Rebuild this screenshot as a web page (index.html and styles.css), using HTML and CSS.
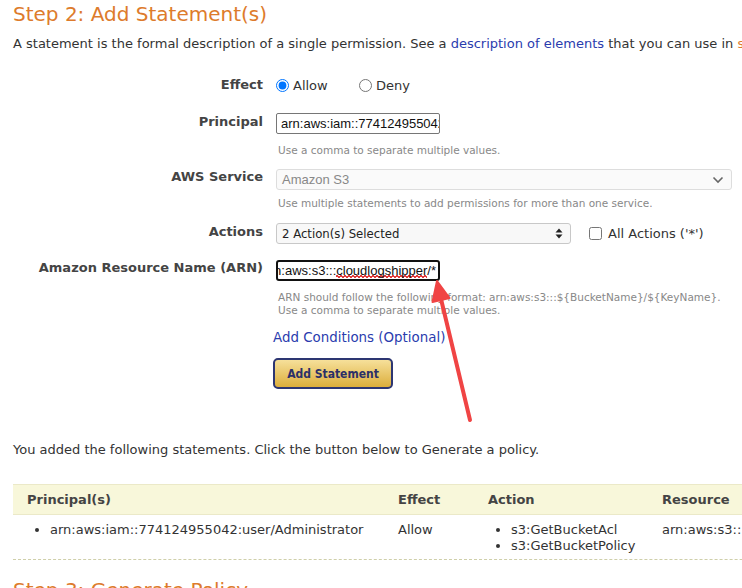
FILE: index.html
```html
<!DOCTYPE html>
<html>
<head>
<meta charset="utf-8">
<link rel="stylesheet" href="styles.css">
</head>
<body>
<div class="page">
  <h2 class="step-title">Step 2: Add Statement(s)</h2>
  <p class="intro">A statement is the formal description of a single permission. See a <a class="link" href="#">description of elements</a> that you can use in <a class="link-orange" href="#">statements</a>.</p>

  <div class="form">
    <div class="field field-effect">
      <div class="field-label">Effect</div>
      <div class="field-control radios">
        <label class="radio"><input type="radio" name="effect" checked> Allow</label>
        <label class="radio"><input type="radio" name="effect"> Deny</label>
      </div>
    </div>

    <div class="field field-principal">
      <div class="field-label">Principal</div>
      <div class="field-control">
        <div class="text-input">arn:aws:iam::774124955042:user/Administrator</div>
        <div class="hint hint-principal">Use a comma to separate multiple values.</div>
      </div>
    </div>

    <div class="field field-service">
      <div class="field-label">AWS Service</div>
      <div class="field-control">
        <div class="select select-disabled">
          <span>Amazon S3</span>
          <svg class="chevron" width="12" height="8" viewBox="0 0 12 8"><path d="M1.5 1.5 L6 6 L10.5 1.5" fill="none" stroke="#666" stroke-width="1.6"/></svg>
        </div>
        <div class="hint hint-service">Use multiple statements to add permissions for more than one service.</div>
      </div>
    </div>

    <div class="field field-actions">
      <div class="field-label">Actions</div>
      <div class="field-control actions-row">
        <div class="select select-actions">
          <span>2 Action(s) Selected</span>
          <svg class="updown" width="8" height="11" viewBox="0 0 8 11"><path d="M4 0.5 L7.5 4.5 L0.5 4.5 Z M4 10.5 L7.5 6.5 L0.5 6.5 Z" fill="#222"/></svg>
        </div>
        <label class="checkbox"><input type="checkbox"> All Actions ('*')</label>
      </div>
    </div>

    <div class="field field-arn">
      <div class="field-label">Amazon Resource Name (ARN)</div>
      <div class="field-control">
        <div class="text-input text-input-focus"><span>arn:aws:s3:::<span class="misspelled">cloudlogshipper</span>/*</span></div>
        <div class="hint hint-arn">ARN should follow the following format: arn:aws:s3:::${BucketName}/${KeyName}.<br>Use a comma to separate multiple values.</div>
      </div>
    </div>

    <div class="field field-conditions">
      <div class="field-label"></div>
      <div class="field-control shifted">
        <a class="link conditions" href="#">Add Conditions (Optional)</a>
        <button class="add-btn">Add Statement</button>
      </div>
    </div>
  </div>

  <p class="added">You added the following statements. Click the button below to Generate a policy.</p>

  <div class="stmt-table">
    <div class="stmt-head">
      <div class="cell c1">Principal(s)</div>
      <div class="cell c2">Effect</div>
      <div class="cell c3">Action</div>
      <div class="cell c4">Resource</div>
    </div>
    <div class="stmt-row">
      <div class="cell c1"><ul><li>arn:aws:iam::774124955042:user/Administrator</li></ul></div>
      <div class="cell c2">Allow</div>
      <div class="cell c3"><ul><li>s3:GetBucketAcl</li><li>s3:GetBucketPolicy</li></ul></div>
      <div class="cell c4">arn:aws:s3:::cloudlogshipper/*</div>
    </div>
  </div>

  <h2 class="step-title step3">Step 3: Generate Policy</h2>
</div>

<svg class="arrow" width="742" height="588" viewBox="0 0 742 588">
  <line x1="470" y1="420" x2="441" y2="299" stroke="#f04444" stroke-width="4" stroke-linecap="round"/>
  <path d="M437 281 L449.5 298 L432.5 302 Z" fill="#f04444" stroke="#f04444" stroke-width="2" stroke-linejoin="round"/>
</svg>
</body>
</html>
```

FILE: styles.css
```css
html, body {
  margin: 0;
  padding: 0;
  overflow: hidden;
  background: #fff;
}
body {
  font-family: "DejaVu Sans", Verdana, sans-serif;
  font-size: 13px;
  color: #333;
  width: 742px;
  height: 588px;
  position: relative;
}
.page {
  padding: 2px 0 0 13px;
  width: 1000px;
}
.step-title {
  margin: 0;
  font-weight: normal;
  font-size: 20px;
  line-height: 24px;
  color: #dd7b2c;
}
.intro {
  margin: 10px 0 0;
  line-height: 16px;
  white-space: nowrap;
}
.link {
  color: #2a3cae;
  text-decoration: none;
}
.link-orange {
  color: #dd7b2c;
  text-decoration: none;
}
.form {
  margin-top: 23px;
}
.field {
  display: flex;
  gap: 13px;
  align-items: flex-start;
}
.field-label {
  width: 250px;
  flex: none;
  text-align: right;
  font-weight: bold;
  color: #444;
  line-height: 16px;
}
.field-control {
  flex: 1;
}
.field-effect .field-label { line-height: 20px; }
.radios {
  display: flex;
  height: 20px;
  align-items: center;
}
.radio {
  display: flex;
  align-items: center;
  gap: 4px;
  color: #333;
  width: 83px;
}
.radio input, .checkbox input {
  margin: 0;
  width: 13px;
  height: 13px;
}
.field-principal { margin-top: 18px; }
.field-principal .field-label { padding-top: 1px; }
.text-input {
  box-sizing: border-box;
  width: 164px;
  height: 21px;
  border: 1px solid #767676;
  border-radius: 2px;
  font-family: "Liberation Sans", Arial, sans-serif;
  font-size: 13px;
  line-height: 19px;
  padding: 0 0 0 4px;
  white-space: nowrap;
  overflow: hidden;
  color: #111;
}
.text-input-focus {
  border: 2px solid #111;
  border-radius: 3px;
  display: flex;
  justify-content: flex-end;
  padding: 0 2px 0 0;
  line-height: 17px;
}
.text-input-focus > span { flex: none; }
.misspelled {
  background-image:
    linear-gradient(45deg, transparent 40%, #e23b3b 40%, #e23b3b 60%, transparent 60%),
    linear-gradient(-45deg, transparent 40%, #e23b3b 40%, #e23b3b 60%, transparent 60%);
  background-size: 4px 3px;
  background-repeat: repeat-x;
  background-position: 0 100%, 2px 100%;
  padding-bottom: 0;
}
.hint {
  font-size: 10.5px;
  line-height: 13px;
  color: #888;
  padding-left: 2px;
}
.hint-principal { margin-top: 10px; }
.field-service { margin-top: 12px; }
.select {
  box-sizing: border-box;
  height: 21px;
  border: 1px solid #ccc;
  border-radius: 3px;
  display: flex;
  align-items: center;
  justify-content: space-between;
  padding: 0 7px 0 5px;
  font-size: 13px;
}
.select-disabled {
  width: 456px;
  background: #fafafa;
  border-color: #ddd;
  color: #888;
  font-family: "Liberation Sans", Arial, sans-serif;
}
.hint-service { margin-top: 7px; }
.field-actions { margin-top: 13px; }
.field-actions .field-label { padding-top: 1px; }
.actions-row {
  display: flex;
  align-items: center;
  gap: 18px;
}
.select-actions {
  width: 295px;
  background: #f8f8f8;
  color: #222;
  border-color: #c8c8c8;
  font-family: "DejaVu Sans Condensed", "DejaVu Sans", sans-serif;
  font-stretch: condensed;
}
.checkbox {
  display: flex;
  align-items: center;
  gap: 6px;
  color: #333;
}
.field-arn { margin-top: 16px; }
.hint-arn { margin-top: 10px; }
.field-conditions { margin-top: 12px; }
.shifted {
  margin-left: -3px;
  display: flex;
  flex-direction: column;
  align-items: flex-start;
}
.conditions {
  font-size: 13.4px;
  line-height: 17px;
}
.add-btn {
  margin-top: 12px;
  width: 120px;
  height: 31px;
  border: 2px solid #2d3672;
  border-radius: 5px;
  background: linear-gradient(#f6e09a, #dcae3c);
  font-family: "DejaVu Sans Condensed", "DejaVu Sans", sans-serif;
  font-stretch: condensed;
  font-weight: bold;
  font-size: 12px;
  color: #2b2f68;
  padding: 0;
}
.added {
  margin: 53px 0 0;
  line-height: 16px;
}
.stmt-table {
  margin-top: 26px;
  width: 900px;
}
.stmt-head, .stmt-row {
  display: grid;
  grid-template-columns: 371px 90px 174px 1fr;
}
.stmt-head {
  background: #f8f7da;
  border-top: 1px solid #ebe9c8;
  border-bottom: 1px solid #ebe9c8;
  height: 29px;
  align-items: center;
  font-weight: bold;
  color: #444;
}
.stmt-row {
  padding: 7px 0 5px;
  border-bottom: 1px dashed #cfcfaa;
  line-height: 16px;
}
.cell {
  padding-left: 14px;
}
.cell ul {
  margin: 0;
  padding-left: 23px;
}
.step3 {
  margin-top: 18px;
}
.arrow {
  position: absolute;
  left: 0;
  top: 0;
  pointer-events: none;
}
```
